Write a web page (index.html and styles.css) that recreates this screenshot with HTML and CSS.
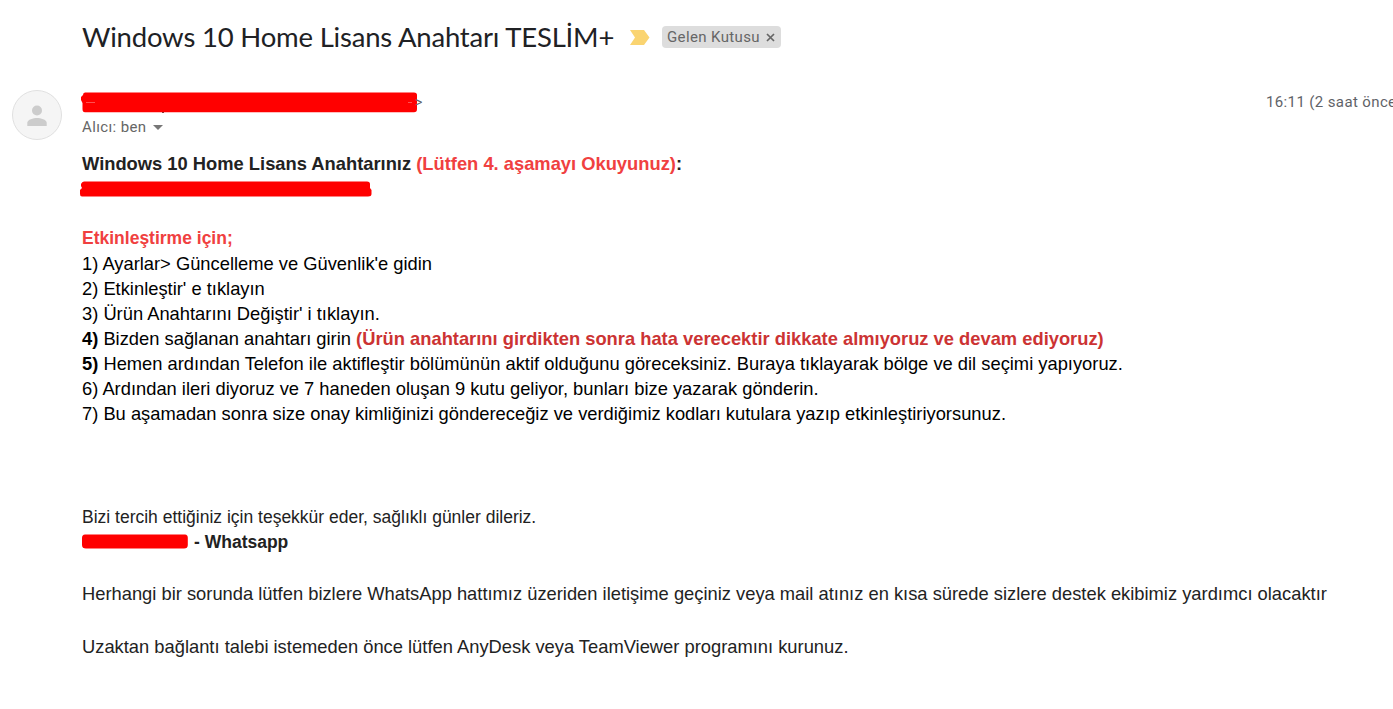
FILE: index.html
```html
<!DOCTYPE html>
<html lang="tr">
<head>
    <meta charset="UTF-8">
    <meta name="viewport" content="width=device-width, initial-scale=1.0">
    <title>Windows 10 Home Lisans Anahtarı TESLİM+</title>
    <link rel="stylesheet" href="styles.css">
</head>
<body>
    <div class="subject">
        <h1>Windows 10 Home Lisans Anahtarı TESLİM+</h1>
        <svg class="importance" width="20" height="15" viewBox="0 0 20 15">
            <path d="M0 0H14L19.5 7.5L14 15H0L5 7.5Z" fill="#fad471"/>
        </svg>
        <div class="tag">
            <span class="tag-name">Gelen Kutusu</span>
            <svg width="9" height="9" viewBox="0 0 9 9">
                <path d="M1 1L8 8M8 1L1 8" stroke="#666" stroke-width="1.7"/>
            </svg>
        </div>
    </div>
    <div class="message">
        <div class="avatar">
            <svg width="50" height="50" viewBox="0 0 50 50">
                <circle cx="25" cy="25" r="24.5" fill="#f5f5f5" stroke="#e0e0e0"/>
                <circle cx="25" cy="20.5" r="5" fill="#ccc"/>
                <path d="M15.3 36V32.8C15.3 29.6 21.5 28 25 28S34.7 29.6 34.7 32.8V36Z" fill="#ccc"/>
            </svg>
        </div>
        <div class="content">
            <div class="sender">
                <svg width="336" height="21" viewBox="0 0 336 21">
                    <path d="M4 0.5H333Q336 0.5 336 3V17Q336 20.3 333 20.3H4Q1.5 20.3 1.5 17V11L0 8V5L2 3Q2 0.5 4 0.5Z" fill="#f00"/>
                    <path d="M5 10.5H14M327 10.5H331" stroke="#f66" stroke-width="0.8"/>
                    <path d="M81 20.5H83" stroke="#833" stroke-width="1"/>
                </svg>
                <span class="bracket">&gt;</span>
                <span class="date">16:11 (2 saat önce</span>
            </div>
            <div class="recipient">
                <span>Alıcı: ben</span>
                <svg width="10" height="5" viewBox="0 0 10 5">
                    <path d="M0 0H10L5 5Z" fill="#777"/>
                </svg>
            </div>
            <div class="mail-body">
                <p class="line"><b>Windows 10 Home Lisans Anahtarınız <span class="red">(Lütfen 4. aşamayı Okuyunuz)</span>:</b></p>
                <svg class="key" width="292" height="17" viewBox="0 0 292 17">
                    <path d="M4 0.5H287Q290 0.5 290 3V7L291.5 9V13Q291.5 15.5 288 15.5H2Q0 15.5 0 13V9L2 7L1 5V3Q2 0.5 4 0.5Z" fill="#f00"/>
                </svg>
                <p class="line small red"><b>Etkinleştirme için;</b></p>
                <div class="steps">
                    <p class="line">1) Ayarlar&gt; Güncelleme ve Güvenlik'e gidin</p>
                    <p class="line">2) Etkinleştir' e tıklayın</p>
                    <p class="line">3) Ürün Anahtarını Değiştir' i tıklayın.</p>
                    <p class="line"><b>4)</b> Bizden sağlanan anahtarı girin <b class="warning">(Ürün anahtarını girdikten sonra hata verecektir dikkate almıyoruz ve devam ediyoruz)</b></p>
                    <p class="line"><b>5)</b> Hemen ardından Telefon ile aktifleştir bölümünün aktif olduğunu göreceksiniz. Buraya tıklayarak bölge ve dil seçimi yapıyoruz.</p>
                    <p class="line">6) Ardından ileri diyoruz ve 7 haneden oluşan 9 kutu geliyor, bunları bize yazarak gönderin.</p>
                    <p class="line">7) Bu aşamadan sonra size onay kimliğinizi göndereceğiz ve verdiğimiz kodları kutulara yazıp etkinleştiriyorsunuz.</p>
                </div>
                <p class="line small">Bizi tercih ettiğiniz için teşekkür eder, sağlıklı günler dileriz.</p>
                <p class="line small phone">
                    <svg width="107" height="16" viewBox="0 0 107 16">
                        <path d="M3 0.5H103Q105.8 0.5 105.8 4V11Q105.8 14.5 102 14.5H4Q0 14.5 0 11V4Q0 0.5 3 0.5Z" fill="#f00"/>
                    </svg>
                    <b>- Whatsapp</b>
                </p>
                <p class="line support">Herhangi bir sorunda lütfen bizlere WhatsApp hattımız üzeriden iletişime geçiniz veya mail atınız en kısa sürede sizlere destek ekibimiz yardımcı olacaktır</p>
                <p class="line remote">Uzaktan bağlantı talebi istemeden önce lütfen AnyDesk veya TeamViewer programını kurunuz.</p>
            </div>
        </div>
    </div>
</body>
</html>
```

FILE: styles.css
```css
* {
    box-sizing: border-box;
}
body {
    margin: 0;
    background-color: #fff;
    color: #222;
    font-family: Arial, "Liberation Sans", sans-serif;
    overflow: hidden;
}
svg {
    display: block;
    flex: none;
}
.subject {
    display: flex;
    align-items: center;
    height: 74px;
    padding-left: 82px;
}
h1 {
    width: 532px;
    margin: 0 0 2px;
    color: #202124;
    font-family: "Google Sans", Lato, sans-serif;
    font-size: 27.5px;
    font-weight: 400;
    letter-spacing: -0.2px;
    white-space: nowrap;
}
.importance {
    margin: 1px 0 0 16px;
}
.tag {
    display: flex;
    align-items: center;
    justify-content: space-between;
    width: 119px;
    height: 22px;
    margin-left: 12px;
    padding: 0 6px 0 5px;
    background-color: #ddd;
    border-radius: 4px;
    color: #666;
    font-family: Roboto, sans-serif;
    font-size: 15px;
    letter-spacing: 0.375px;
}
.message {
    display: flex;
    padding: 16px 0 0 12px;
}
.avatar {
    width: 70px;
}
.content {
    flex: 1;
}
.sender {
    display: flex;
    align-items: center;
    height: 24px;
    color: #5f6368;
    font-family: Roboto, sans-serif;
    font-size: 15px;
    letter-spacing: 0.375px;
    white-space: nowrap;
}
.sender svg {
    margin-left: -1px;
}
.bracket {
    margin-left: -2px;
    font-size: 14px;
}
.date {
    width: 127px;
    margin-left: auto;
}
.recipient {
    display: flex;
    align-items: center;
    gap: 7px;
    height: 26px;
    color: #666;
    font-family: Roboto, sans-serif;
    font-size: 15px;
    letter-spacing: 0.375px;
}
.mail-body {
    padding-top: 11px;
    font-size: 18.333px;
}
.line {
    height: 25px;
    margin: 0;
    line-height: 25px;
    white-space: nowrap;
}
.small {
    font-size: 17.5px;
}
.red {
    color: #f04040;
}
.key {
    margin: 5px 0 28px -2px;
}
.steps {
    margin: 0 0 79px;
    color: #000;
}
.warning {
    color: #cc3333;
}
.phone {
    display: flex;
    align-items: center;
    gap: 5px;
}
.phone svg {
    margin-bottom: 2px;
}
.support {
    margin-top: 26px;
}
.remote {
    margin-top: 28px;
}
```
